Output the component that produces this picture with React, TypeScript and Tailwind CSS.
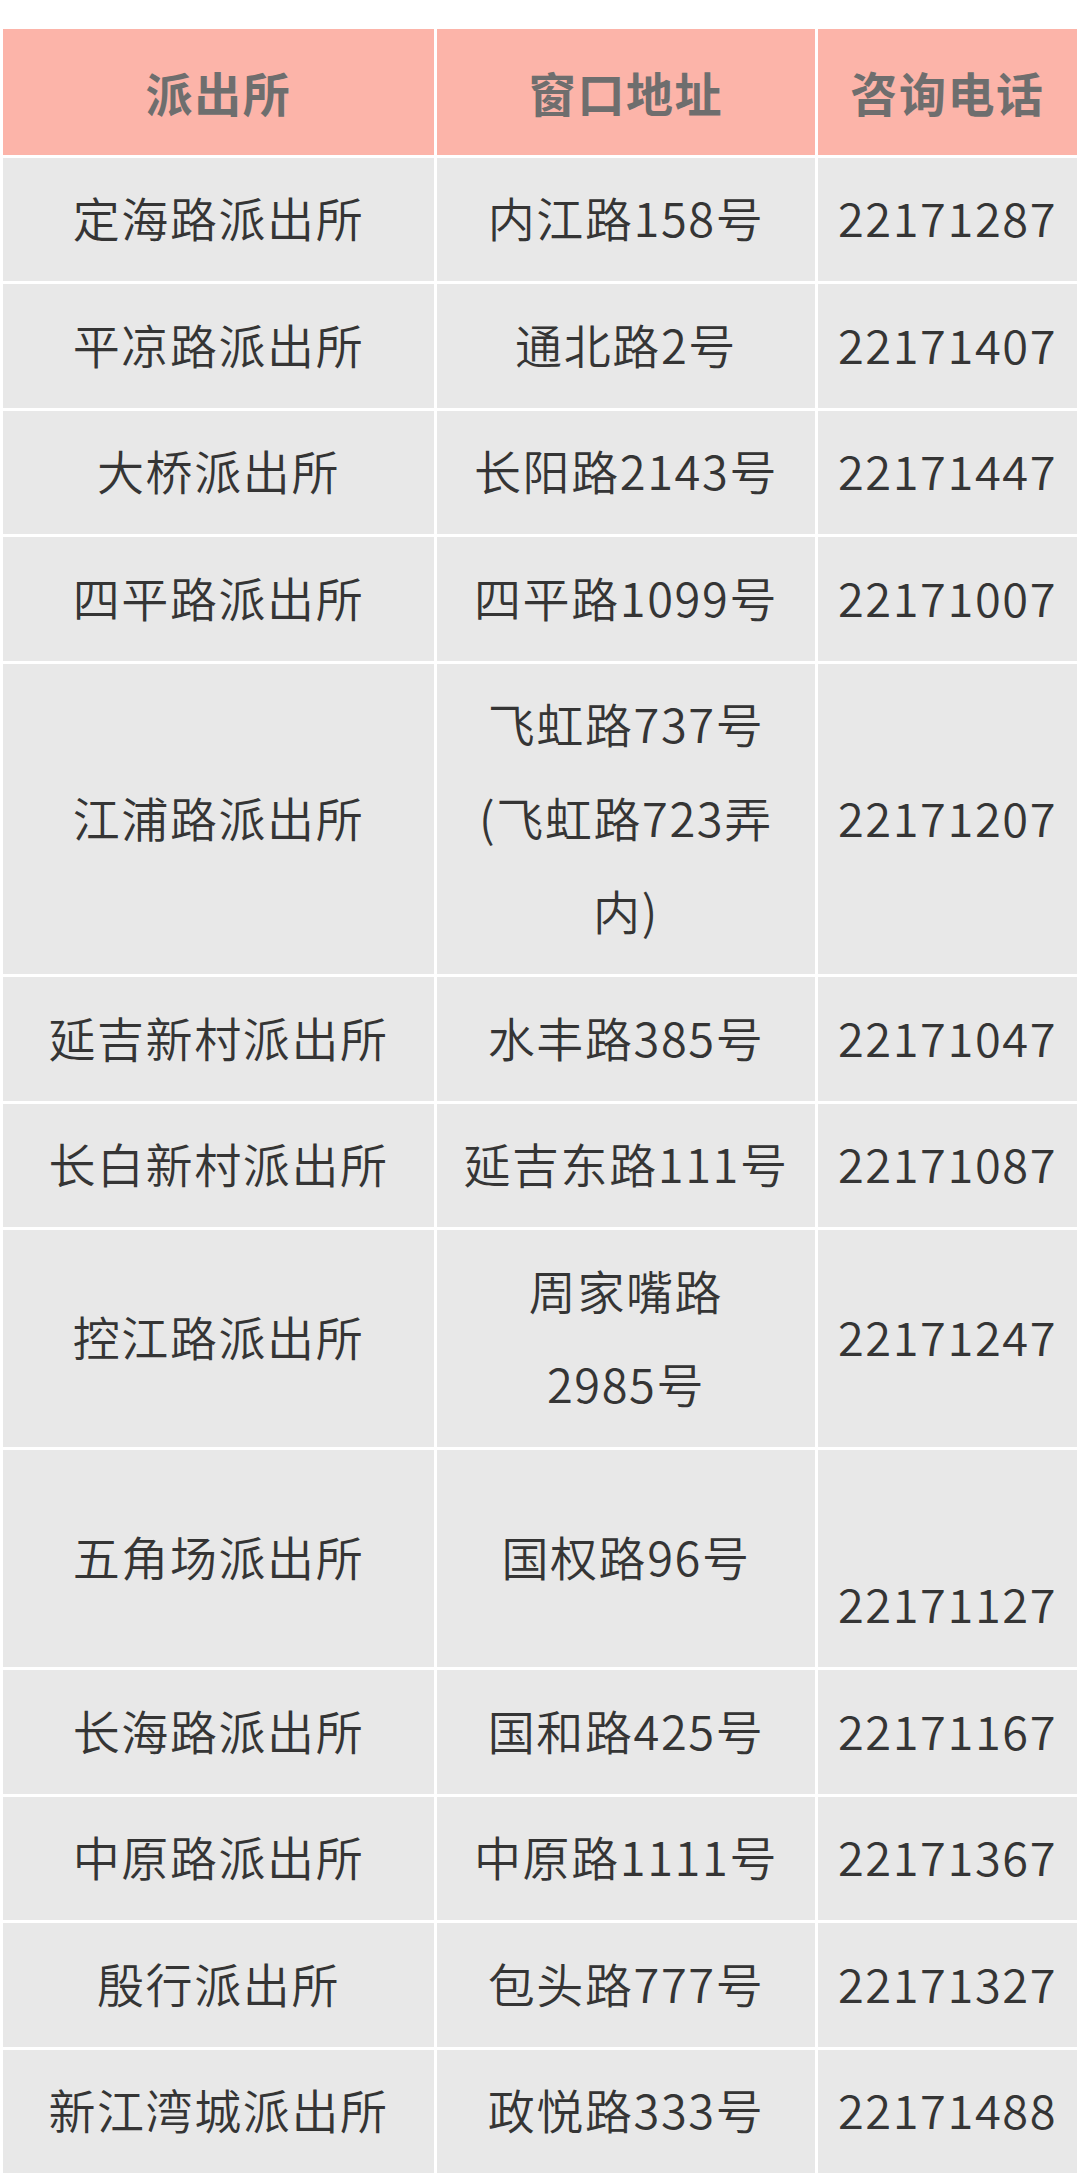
const rows: { name: string; addr: string[]; phone: string[] }[] = [
  { name: '定海路派出所', addr: ['内江路158号'], phone: ['22171287'] },
  { name: '平凉路派出所', addr: ['通北路2号'], phone: ['22171407'] },
  { name: '大桥派出所', addr: ['长阳路2143号'], phone: ['22171447'] },
  { name: '四平路派出所', addr: ['四平路1099号'], phone: ['22171007'] },
  { name: '江浦路派出所', addr: ['飞虹路737号', '(飞虹路723弄', '内)'], phone: ['22171207'] },
  { name: '延吉新村派出所', addr: ['水丰路385号'], phone: ['22171047'] },
  { name: '长白新村派出所', addr: ['延吉东路111号'], phone: ['22171087'] },
  { name: '控江路派出所', addr: ['周家嘴路', '2985号'], phone: ['22171247'] },
  { name: '五角场派出所', addr: ['国权路96号'], phone: ['\u00a0', '22171127'] },
  { name: '长海路派出所', addr: ['国和路425号'], phone: ['22171167'] },
  { name: '中原路派出所', addr: ['中原路1111号'], phone: ['22171367'] },
  { name: '殷行派出所', addr: ['包头路777号'], phone: ['22171327'] },
  { name: '新江湾城派出所', addr: ['政悦路333号'], phone: ['22171488'] },
]

function Lines({ lines }: { lines: string[] }) {
  return (
    <>
      {lines.map((l, i) => (
        <div key={i}>{l}</div>
      ))}
    </>
  )
}

export default function App() {
  const cell = 'bg-[#e8e8e8] text-center align-middle pt-[12.5px] pb-[17.5px] px-0 whitespace-nowrap font-[350]'
  const head = 'bg-[#fcb4a9] text-center align-middle py-[16px] px-0 font-bold text-[#6e6e6e]'
  return (
    <div
      className="w-[1080px] bg-white pt-[26px] pb-[2px] text-[47px] leading-[93.5px] tracking-[1.6px] text-[#353535]"
      style={{ fontFamily: '"Noto Sans CJK SC", "Noto Sans", sans-serif' }}
    >
      <table className="w-[1080px] border-separate border-spacing-[3px] table-fixed">
        <colgroup>
          <col className="w-[431px]" />
          <col className="w-[378px]" />
          <col className="w-[259px]" />
        </colgroup>
        <thead>
          <tr>
            <th className={head}>派出所</th>
            <th className={head}>窗口地址</th>
            <th className={head}>咨询电话</th>
          </tr>
        </thead>
        <tbody>
          {rows.map((r) => (
            <tr key={r.name}>
              <td className={cell}>{r.name}</td>
              <td className={cell}>
                <Lines lines={r.addr} />
              </td>
              <td className={cell}>
                <Lines lines={r.phone} />
              </td>
            </tr>
          ))}
        </tbody>
      </table>
    </div>
  )
}
